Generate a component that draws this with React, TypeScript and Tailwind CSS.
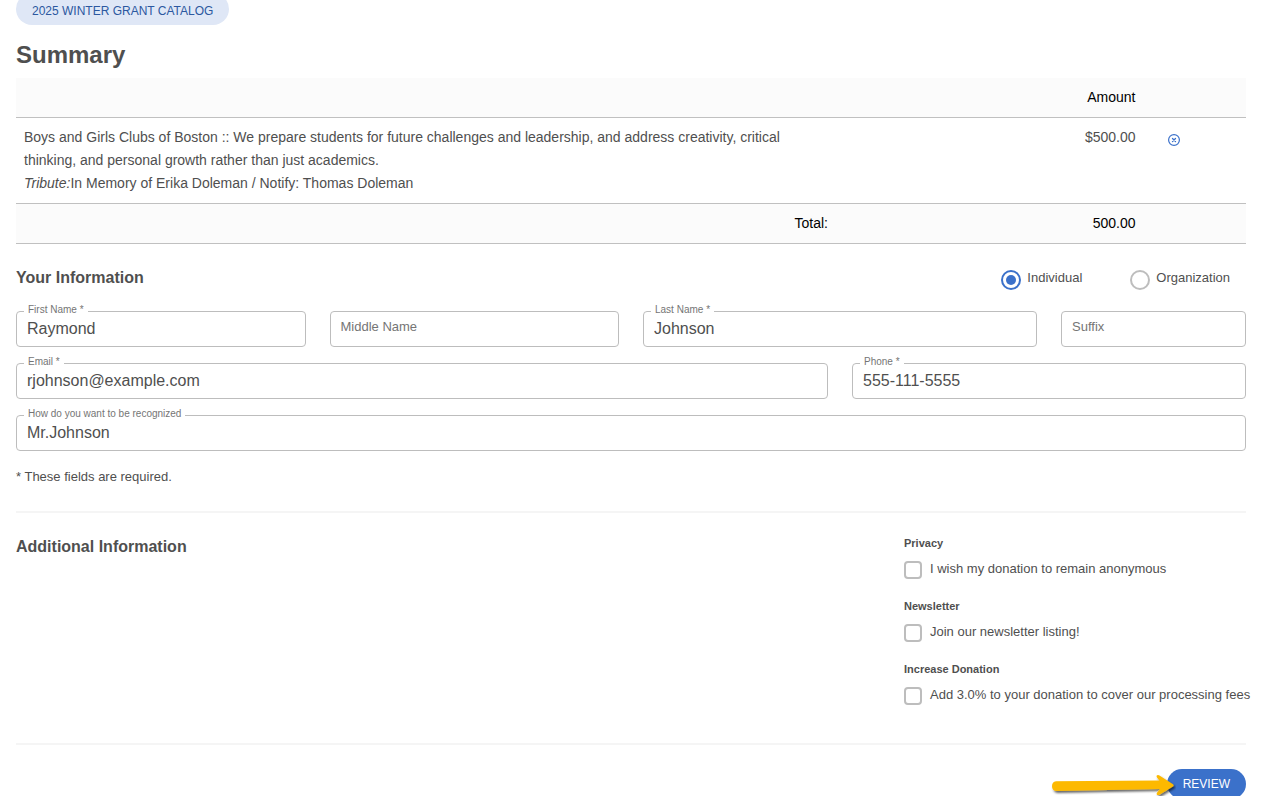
import { useState } from 'react';
import { clsx } from 'clsx';

type FieldProps = {
  id: string;
  label: string;
  type?: string;
  initialValue?: string;
  className?: string;
};

function Field({ id, label, type = 'text', initialValue = '', className }: FieldProps) {
  const [value, setValue] = useState(initialValue);

  return (
    <div className={clsx('relative', className)}>
      <input
        id={id}
        type={type}
        value={value}
        onChange={(e) => setValue(e.target.value)}
        className="block h-9 w-full rounded border border-[#bdbdbd] bg-white px-2.5 text-base text-[#4f4f4f] outline-none focus:border-[#3b71ca]"
      />
      <label
        htmlFor={id}
        className={clsx(
          'pointer-events-none absolute text-[#757575]',
          value
            ? '-top-[7px] left-2 bg-white px-1 text-[10px] leading-3'
            : 'top-1.5 left-[11px] text-[13px] leading-5'
        )}
      >
        {label}
      </label>
    </div>
  );
}

type RadioProps = {
  label: string;
  checked: boolean;
  onSelect: () => void;
};

function DonorRadio({ label, checked, onSelect }: RadioProps) {
  return (
    <label className="flex items-start gap-1.5 text-[13px] leading-5">
      <input
        type="radio"
        name="donorType"
        checked={checked}
        onChange={onSelect}
        className="mt-0.5 grid size-5 appearance-none place-content-center rounded-full border-2 border-[#bdbdbd] before:size-2.5 before:rounded-full checked:border-[#3b71ca] checked:before:bg-[#3b71ca]"
      />
      {label}
    </label>
  );
}

type OptionProps = {
  title: string;
  label: string;
};

function Option({ title, label }: OptionProps) {
  return (
    <div>
      <h3 className="text-[11px] leading-4 font-bold">{title}</h3>
      <label className="mt-2 flex items-start gap-2 text-[13px] leading-5 whitespace-nowrap">
        <input
          type="checkbox"
          className="mt-0.5 size-[18px] shrink-0 appearance-none rounded border-2 border-[#bdbdbd] checked:border-[#3b71ca] checked:bg-[#3b71ca]"
        />
        {label}
      </label>
    </div>
  );
}

function RemoveIcon() {
  return (
    <svg viewBox="0 0 12 12" className="size-3" fill="none" stroke="currentColor" aria-hidden="true">
      <circle cx="6" cy="6" r="5.4" strokeWidth="1.2" />
      <path d="M4.5 4.5l3 3M7.5 4.5l-3 3" strokeWidth="1.3" strokeLinecap="round" />
    </svg>
  );
}

function PointerArrow() {
  return (
    <svg
      viewBox="0 0 128 32"
      className="pointer-events-none absolute -top-0.5 right-[70px] h-8 w-32"
      aria-hidden="true"
    >
      <defs>
        <filter id="arrow-shadow" x="-10%" y="-30%" width="120%" height="180%">
          <feDropShadow dx="1.5" dy="2" stdDeviation="1" floodColor="#000" floodOpacity="0.6" />
        </filter>
      </defs>
      <path
        d="M8 14.3L111.5 13.6L108.6 10Q108 7.6 111 8.2L125 17.2Q126.5 18.4 125 19.6L111 28Q108 28.4 108.8 26L112 22L8 24Q4 23.5 4 19.3Q4 15 8 14.3Z"
        fill="#fdb900"
        filter="url(#arrow-shadow)"
      />
    </svg>
  );
}

export default function App() {
  const [donorType, setDonorType] = useState('individual');

  return (
    <main className="flex h-screen flex-col overflow-hidden bg-white px-4 font-['Liberation_Sans',Arial,sans-serif] text-[#4f4f4f]">
      <div className="-mt-[7px] flex shrink-0">
        <span className="flex h-8 items-center rounded-full bg-[#dfe7f6] px-4 pt-1 text-xs text-[#2c58a0]">
          2025 WINTER GRANT CATALOG
        </span>
      </div>

      <h1 className="mt-3.5 text-2xl leading-8 font-bold">Summary</h1>

      <table className="mt-[7px] w-full shrink-0 table-fixed border-collapse text-sm leading-[23px]">
        <colgroup>
          <col className="w-8/12" />
          <col className="w-3/12" />
          <col className="w-1/12" />
        </colgroup>
        <thead>
          <tr className="border-b border-[#c0c0c0] bg-[#fbfbfb] text-black">
            <td className="p-2" />
            <th scope="col" className="p-2 text-right font-normal">Amount</th>
            <td className="p-2" />
          </tr>
        </thead>
        <tbody>
          <tr className="border-b border-[#c0c0c0] align-top">
            <td className="p-2">
              Boys and Girls Clubs of Boston :: We prepare students for future challenges and
              leadership, and address creativity, critical thinking, and personal growth rather
              than just academics.
              <br />
              <em>Tribute:</em>In Memory of Erika Doleman / Notify: Thomas Doleman
            </td>
            <td className="p-2 text-right">$500.00</td>
            <td className="px-6 py-4">
              <button type="button" aria-label="Remove" className="block text-[#3b71ca]">
                <RemoveIcon />
              </button>
            </td>
          </tr>
        </tbody>
        <tfoot>
          <tr className="border-b border-[#c0c0c0] bg-[#fbfbfb] text-black">
            <td className="p-2 text-right">Total:</td>
            <td className="p-2 text-right">500.00</td>
            <td className="p-2" />
          </tr>
        </tfoot>
      </table>

      <section className="mt-6 shrink-0">
        <div className="flex items-start justify-between">
          <h2 className="text-base leading-5 font-bold">Your Information</h2>
          <div className="flex gap-12 pr-4">
            <DonorRadio
              label="Individual"
              checked={donorType === 'individual'}
              onSelect={() => setDonorType('individual')}
            />
            <DonorRadio
              label="Organization"
              checked={donorType === 'organization'}
              onSelect={() => setDonorType('organization')}
            />
          </div>
        </div>

        <div className="mt-[21px] grid grid-cols-12 gap-x-6 gap-y-4">
          <Field id="firstName" label="First Name *" initialValue="Raymond" className="col-span-3" />
          <Field id="middleName" label="Middle Name" className="col-span-3" />
          <Field id="lastName" label="Last Name *" initialValue="Johnson" className="col-span-4" />
          <Field id="suffix" label="Suffix" className="col-span-2" />
          <Field
            id="email"
            label="Email *"
            type="email"
            initialValue="rjohnson@example.com"
            className="col-span-8"
          />
          <Field
            id="phone"
            label="Phone *"
            type="tel"
            initialValue="555-111-5555"
            className="col-span-4"
          />
          <Field
            id="recognition"
            label="How do you want to be recognized"
            initialValue="Mr.Johnson"
            className="col-span-12"
          />
        </div>

        <p className="mt-4 text-[13px] leading-5">* These fields are required.</p>
      </section>

      <hr className="mt-6 shrink-0 border-t-2 border-[#f5f5f5]" />

      <section className="mt-[22px] flex shrink-0 items-start justify-between">
        <h2 className="text-base leading-6 font-bold">Additional Information</h2>
        <div className="flex w-[342px] flex-col gap-[19px]">
          <Option title="Privacy" label="I wish my donation to remain anonymous" />
          <Option title="Newsletter" label="Join our newsletter listing!" />
          <Option
            title="Increase Donation"
            label="Add 3.0% to your donation to cover our processing fees"
          />
        </div>
      </section>

      <hr className="mt-[38px] shrink-0 border-t-2 border-[#f5f5f5]" />

      <div className="relative mt-6 flex shrink-0 justify-end">
        <button
          type="button"
          className="h-[30px] rounded-full bg-[#3b71ca] px-4 text-xs font-normal text-white"
        >
          REVIEW
        </button>
        <PointerArrow />
      </div>
    </main>
  );
}
